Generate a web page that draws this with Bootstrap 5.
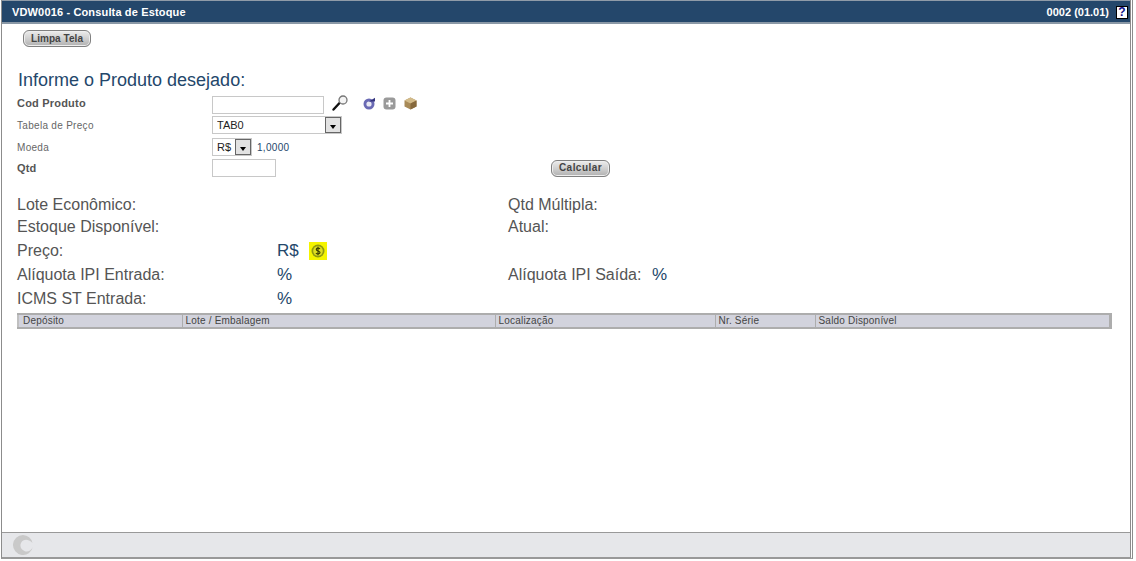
<!DOCTYPE html>
<html lang="pt-BR">
<head>
    <meta charset="UTF-8">
    <meta name="viewport" content="width=device-width, initial-scale=1.0">
    <title>VDW0016 - Consulta de Estoque</title>
    <link href="https://cdn.jsdelivr.net/npm/bootstrap@5.3.3/dist/css/bootstrap.min.css" rel="stylesheet">
    <style>
        html, body {
            height: 561px;
            overflow: hidden;
            background-color: #fff;
        }
        body {
            font-family: "Liberation Sans", Arial, sans-serif;
        }
        .app-frame {
            width: 1132px;
            height: 559px;
            margin-left: 1px;
            border-left: 1px solid #8c8c8c;
            border-right: 3px double #8c8c8c;
            border-bottom: 2px solid #999;
        }
        .title-bar {
            height: 24px;
            padding: 1px 2px 0 10px;
            background-color: #24476b;
            border-top: 1px solid #8f9ba8;
            border-bottom: 2px solid #8a98a6;
            color: #fff;
            font-size: 11px;
            font-weight: 700;
        }
        .title-name {
            letter-spacing: .15px;
        }
        .help-box {
            width: 12px;
            height: 13px;
            margin-left: 7px;
            background-color: #fff;
            border: 1px solid #000;
            color: #10108a;
            font-size: 12px;
            font-weight: 700;
            line-height: 11px;
            text-align: center;
        }
        .app-body {
            padding: 6px 19px 0 15px;
        }
        .gray-btn {
            height: 17px;
            padding: 0;
            border: 1px solid #808080;
            border-radius: 6px;
            background: linear-gradient(#ececec, #cdcdcd 55%, #b0b0b0);
            box-shadow: inset 0 0 0 1px #eee;
            color: #444;
            font-size: 10px;
            font-weight: 700;
            letter-spacing: .45px;
            line-height: 14px;
            white-space: nowrap;
        }
        .clear-btn {
            width: 68px;
            margin-left: 6px;
            letter-spacing: .05px;
        }
        .calc-btn {
            width: 59px;
            margin-left: 275px;
        }
        .form-heading {
            margin: 22px 0 1px 1px;
            color: #24476b;
            font-size: 18px;
            line-height: 22px;
        }
        .field-row {
            height: 22px;
        }
        .field-row.short-row {
            height: 20px;
        }
        .field-row > .field-label {
            width: 195px;
            flex: none;
            color: #666;
            font-size: 10px;
            letter-spacing: .3px;
        }
        .field-label.strong {
            color: #555;
            font-size: 11px;
            font-weight: 700;
            letter-spacing: .2px;
        }
        .text-box {
            height: 18px;
            padding: 0 4px;
            border: 1px solid #c8c8c8;
            background-color: #fff;
            color: #222;
            font-size: 11px;
        }
        .code-box {
            margin-top: 4px;
        }
        .select-wrap {
            height: 18px;
        }
        .select-wrap select {
            display: block;
            width: 100%;
            height: 18px;
            padding: 0 4px;
            border: 1px solid #c8c8c8;
            border-radius: 0;
            background-color: #fff;
            color: #222;
            font-size: 11px;
            appearance: none;
        }
        .select-arrow {
            position: absolute;
            top: 1px;
            right: 1px;
            width: 16px;
            height: 16px;
            border: 1px solid #666;
            background-color: #e2e2e2;
        }
        .select-arrow::after {
            content: "";
            position: absolute;
            left: 4px;
            top: 7px;
            border-style: solid;
            border-width: 4px 3.5px 0;
            border-color: #000 transparent transparent;
        }
        .rate-text {
            margin-left: 5px;
            color: #24476b;
            font-size: 10px;
            letter-spacing: .3px;
        }
        .tool-icons {
            margin-left: 14px;
        }
        .info-block {
            margin-top: 16px;
        }
        .info-row {
            height: 22px;
            font-size: 16px;
            color: #555;
        }
        .info-row.spaced {
            margin-top: 2px;
        }
        .info-left {
            width: 491px;
            flex: none;
        }
        .info-label {
            width: 260px;
            flex: none;
        }
        .info-right-label {
            width: 144px;
            flex: none;
        }
        .info-value {
            color: #24476b;
            font-size: 17px;
        }
        .coin-icon {
            margin-left: 10px;
        }
        table.stock-grid {
            width: 1095px;
            margin: 3px 0 0;
            table-layout: fixed;
            border-top: 2px solid #adadad;
            border-bottom: 2px solid #adadad;
            border-right: 3px solid #adadad;
            border-left: 2px solid #c0c0c0;
        }
        table.stock-grid th {
            height: 12px;
            padding: 0 3px;
            border-bottom: 0;
            border-right: 1px solid #adadad;
            background-color: #d2d3dd;
            color: #444;
            font-size: 10px;
            font-weight: 400;
            letter-spacing: .2px;
            line-height: 12px;
        }
        table.stock-grid th:first-child {
            padding-left: 4px;
        }
        table.stock-grid th:last-child {
            border-right: 0;
        }
        .status-bar {
            height: 25px;
            padding-left: 11px;
            background-color: #e6e7ea;
            border-top: 1px solid #999;
            margin-top: auto;
        }
    </style>
</head>
<body>
    <div class="app-frame d-flex flex-column">
        <div class="title-bar d-flex align-items-center justify-content-between">
            <span class="title-name">VDW0016 - Consulta de Estoque</span>
            <span class="d-flex align-items-center">0002 (01.01)<span class="help-box">?</span></span>
        </div>

        <div class="app-body">
            <button type="button" class="gray-btn clear-btn d-block">Limpa Tela</button>

            <h1 class="form-heading fw-normal">Informe o Produto desejado:</h1>

            <!-- Product fields -->
            <div class="field-row d-flex align-items-center">
                <span class="field-label strong">Cod Produto</span>
                <input type="text" class="text-box code-box" style="width: 112px">
                <span class="d-flex align-items-center ms-2">
                    <svg width="17" height="16" viewBox="0 0 17 16">
                        <line x1="1.5" y1="14.5" x2="7.5" y2="8" stroke="#111" stroke-width="2.4" stroke-linecap="round"/>
                        <circle cx="11" cy="5" r="4" fill="#f4f4f4" stroke="#777" stroke-width="1.3"/>
                    </svg>
                    <span class="tool-icons d-flex align-items-center gap-2">
                        <svg width="12" height="13" viewBox="0 0 12 13">
                            <circle cx="6" cy="7" r="5.5" fill="#6a6ab4"/>
                            <circle cx="6" cy="7" r="2.6" fill="#e8e8f4"/>
                            <path d="M6 4.5h6V.8z" fill="#34347e"/>
                        </svg>
                        <svg width="13" height="13" viewBox="0 0 13 13">
                            <rect x=".5" y=".5" width="12" height="12" rx="3" fill="#9a9a9a"/>
                            <path d="M6.5 3v7M3 6.5h7" stroke="#fff" stroke-width="1.8"/>
                        </svg>
                        <svg width="13" height="13" viewBox="0 0 13 13">
                            <path d="M6.5.5l6 3v6l-6 3-6-3v-6z" fill="#a88a58"/>
                            <path d="M.5 3.5l6 3 6-3-6-3z" fill="#d3bb8a"/>
                            <path d="M6.5 6.5v6l6-3v-6z" fill="#86693c"/>
                        </svg>
                    </span>
                </span>
            </div>
            <div class="field-row d-flex align-items-center">
                <span class="field-label">Tabela de Preço</span>
                <span class="select-wrap position-relative d-block" style="width: 130px">
                    <select><option>TAB0</option></select>
                    <span class="select-arrow"></span>
                </span>
            </div>
            <div class="field-row d-flex align-items-center">
                <span class="field-label">Moeda</span>
                <span class="select-wrap position-relative d-block" style="width: 40px">
                    <select><option>R$</option></select>
                    <span class="select-arrow"></span>
                </span>
                <span class="rate-text">1,0000</span>
            </div>
            <div class="field-row short-row d-flex align-items-center">
                <span class="field-label strong">Qtd</span>
                <input type="text" class="text-box" style="width: 64px">
                <button type="button" class="gray-btn calc-btn">Calcular</button>
            </div>

            <!-- Product info -->
            <div class="info-block">
                <div class="info-row d-flex align-items-center">
                    <span class="info-left">Lote Econômico:</span>
                    <span>Qtd Múltipla:</span>
                </div>
                <div class="info-row d-flex align-items-center">
                    <span class="info-left">Estoque Disponível:</span>
                    <span>Atual:</span>
                </div>
                <div class="info-row spaced d-flex align-items-center">
                    <span class="info-label">Preço:</span>
                    <span class="info-value">R$</span>
                    <svg width="18" height="18" viewBox="0 0 18 18" class="coin-icon">
                        <rect width="18" height="18" fill="#f4f400"/>
                        <circle cx="9" cy="9" r="6.5" fill="#8f9a10"/>
                        <circle cx="9" cy="9" r="4.8" fill="#dede20"/>
                        <path d="M11 6.8C10 5.8 7.3 5.8 7.3 7.5S11 8.9 11 10.6 8 12.3 6.9 11.2M9 4.8v8.4" fill="none" stroke="#3c4200" stroke-width="1.2"/>
                    </svg>
                </div>
                <div class="info-row spaced d-flex align-items-center">
                    <span class="info-label">Alíquota IPI Entrada:</span>
                    <span class="info-value" style="width: 231px">%</span>
                    <span class="info-right-label">Alíquota IPI Saída:</span>
                    <span class="info-value">%</span>
                </div>
                <div class="info-row spaced d-flex align-items-center">
                    <span class="info-label">ICMS ST Entrada:</span>
                    <span class="info-value">%</span>
                </div>
            </div>

            <!-- Stock grid -->
            <table class="stock-grid">
                <thead>
                    <tr>
                        <th style="width: 164px">Depósito</th>
                        <th style="width: 313px">Lote / Embalagem</th>
                        <th style="width: 220px">Localização</th>
                        <th style="width: 100px">Nr. Série</th>
                        <th>Saldo Disponível</th>
                    </tr>
                </thead>
            </table>
        </div>

        <div class="status-bar d-flex align-items-center">
            <svg width="20" height="20" viewBox="0 0 20 20">
                <path d="M10 0A10 10 0 1 0 19.8 12C18 16 14 17.5 11.5 16 8 14.5 6.5 11 8 8 9.5 5 13 4 16 5.5 17.5 6 19 7.5 19.5 8A10 10 0 0 0 10 0z" fill="#c9c9c9"/>
            </svg>
        </div>
    </div>

    <script src="https://cdn.jsdelivr.net/npm/bootstrap@5.3.3/dist/js/bootstrap.bundle.min.js"></script>
</body>
</html>
